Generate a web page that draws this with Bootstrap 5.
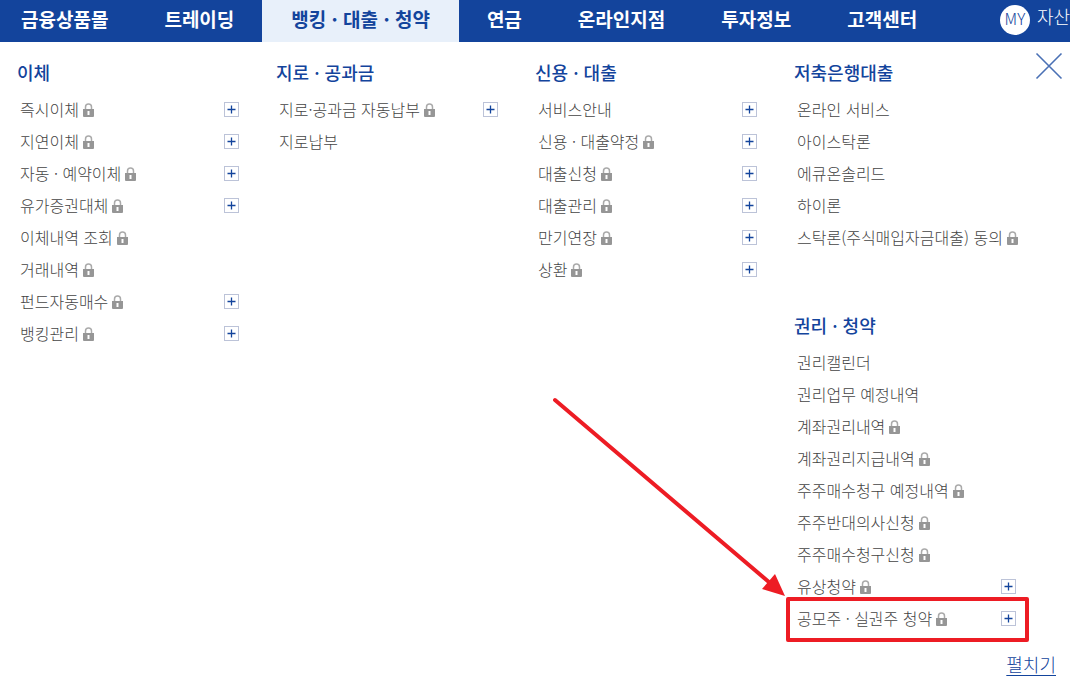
<!DOCTYPE html>
<html lang="ko">
<head>
<meta charset="utf-8">
<meta name="viewport" content="width=device-width, initial-scale=1">
<title>뱅킹 · 대출 · 청약</title>
<link href="https://cdn.jsdelivr.net/npm/bootstrap@5.3.0/dist/css/bootstrap.min.css" rel="stylesheet">
<style>
  :root { --brand: #13449c; --brand-soft: #e8f0fa; --mark: #ed1c24; }
  body { font-family: "Noto Sans CJK KR", sans-serif; font-size: 16px; color: #444; background: #fff; }
  a { text-decoration: none; }
  .gnb { background: var(--brand); height: 42px; }
  .gnb .nav-link { color: #fff; font-size: 19px; font-weight: 700; line-height: 38px; padding: 0 28px 4px; }
  .gnb .nav-item:first-child .nav-link { padding-left: 21px; }
  .gnb .nav-link.active { background: var(--brand-soft); color: var(--brand); padding: 0 29px 4px; }
  .my-link { color: #fff; font-size: 18px; font-weight: 300; line-height: 32px; margin-left: auto; gap: 7px; }
  .my-mark { width: 30px; height: 30px; margin-top: 5px; background: #fff; color: var(--brand); font-size: 16px; line-height: 26px; }
  .mega { padding: 15px 17px 0 17px; }
  .menu-title { color: var(--brand); font-size: 18px; font-weight: 500; line-height: 30px; margin: 0 0 6px; }
  .menu-list { margin: 0 0 57px; }
  .menu-list li { height: 32px; padding: 0 37px 0 3px; }
  .menu-list a { color: inherit; font-weight: 300; line-height: 32px; white-space: nowrap; }
  .lock { width: 11px; height: 14px; margin: 2px 0 0 4px; flex: none; }
  .more { width: 15px; height: 15px; padding: 0; border: 1px solid #bcc3d8; background: #fff; flex: none; }
  .more svg { display: block; width: 13px; height: 13px; }
  .menu-list:last-child { margin-bottom: 0; }
  .close-menu { position: absolute; top: 10px; right: 7px; width: 28px; height: 28px; padding: 0; border: 0; background: none; }
  .close-menu svg { display: block; }
  .mark-box { position: absolute; inset: -5px 24px -8px -8px; border: 4px solid var(--mark); border-radius: 2px; pointer-events: none; }
  .mark-arrow { position: absolute; right: calc(100% + 5px); bottom: calc(100% + 5px); pointer-events: none; }
  .unfold { padding: 14px 14px 0; font-size: 18px; line-height: 32px; }
  .unfold a { color: var(--brand); font-weight: 300; text-decoration: underline; text-underline-offset: 3px; text-decoration-thickness: 1px; }
</style>
</head>
<body>
<svg class="d-none" aria-hidden="true">
  <symbol id="lock" viewBox="0 0 11 14">
    <path d="M2.500 6V4a3 3 0 0 1 6 0v2" fill="none" stroke="#aaa" stroke-width="1.500"/>
    <path d="M0 6h11v7q0 1-1 1H1q-1 0-1-1z" fill="#969696"/>
    <path d="M4.500 8h2v4h-2z" fill="#fff"/>
  </symbol>
  <symbol id="plus" viewBox="0 0 13 13">
    <path d="M6.500 2.500v8M2.500 6.500h8" stroke="#13449c" stroke-width="1.300"/>
  </symbol>
</svg>

<header class="gnb d-flex overflow-hidden">
  <ul class="nav flex-nowrap flex-shrink-0 text-nowrap">
    <li class="nav-item"><a class="nav-link" href="#">금융상품몰</a></li>
    <li class="nav-item"><a class="nav-link" href="#">트레이딩</a></li>
    <li class="nav-item"><a class="nav-link active" aria-current="page" href="#">뱅킹 · 대출 · 청약</a></li>
    <li class="nav-item"><a class="nav-link" href="#">연금</a></li>
    <li class="nav-item"><a class="nav-link" href="#">온라인지점</a></li>
    <li class="nav-item"><a class="nav-link" href="#">투자정보</a></li>
    <li class="nav-item"><a class="nav-link" href="#">고객센터</a></li>
  </ul>
  <a class="my-link d-flex flex-shrink-0 text-nowrap" href="#"><span class="my-mark rounded-circle text-center">MY</span>자산</a>
</header>

<main class="mega position-relative">
  <div class="row g-0">
    <section class="col-3">
      <h2 class="menu-title">이체</h2>
      <ul class="menu-list list-unstyled">
        <li class="d-flex align-items-center"><a href="#">즉시이체</a><svg class="lock"><use href="#lock"/></svg><button class="more ms-auto" type="button" aria-label="즉시이체 더보기"><svg><use href="#plus"/></svg></button></li>
        <li class="d-flex align-items-center"><a href="#">지연이체</a><svg class="lock"><use href="#lock"/></svg><button class="more ms-auto" type="button" aria-label="지연이체 더보기"><svg><use href="#plus"/></svg></button></li>
        <li class="d-flex align-items-center"><a href="#">자동 · 예약이체</a><svg class="lock"><use href="#lock"/></svg><button class="more ms-auto" type="button" aria-label="자동 · 예약이체 더보기"><svg><use href="#plus"/></svg></button></li>
        <li class="d-flex align-items-center"><a href="#">유가증권대체</a><svg class="lock"><use href="#lock"/></svg><button class="more ms-auto" type="button" aria-label="유가증권대체 더보기"><svg><use href="#plus"/></svg></button></li>
        <li class="d-flex align-items-center"><a href="#">이체내역 조회</a><svg class="lock"><use href="#lock"/></svg></li>
        <li class="d-flex align-items-center"><a href="#">거래내역</a><svg class="lock"><use href="#lock"/></svg></li>
        <li class="d-flex align-items-center"><a href="#">펀드자동매수</a><svg class="lock"><use href="#lock"/></svg><button class="more ms-auto" type="button" aria-label="펀드자동매수 더보기"><svg><use href="#plus"/></svg></button></li>
        <li class="d-flex align-items-center"><a href="#">뱅킹관리</a><svg class="lock"><use href="#lock"/></svg><button class="more ms-auto" type="button" aria-label="뱅킹관리 더보기"><svg><use href="#plus"/></svg></button></li>
      </ul>
    </section>
    <section class="col-3">
      <h2 class="menu-title">지로 · 공과금</h2>
      <ul class="menu-list list-unstyled">
        <li class="d-flex align-items-center"><a href="#">지로·공과금 자동납부</a><svg class="lock"><use href="#lock"/></svg><button class="more ms-auto" type="button" aria-label="지로·공과금 자동납부 더보기"><svg><use href="#plus"/></svg></button></li>
        <li class="d-flex align-items-center"><a href="#">지로납부</a></li>
      </ul>
    </section>
    <section class="col-3">
      <h2 class="menu-title">신용 · 대출</h2>
      <ul class="menu-list list-unstyled">
        <li class="d-flex align-items-center"><a href="#">서비스안내</a><button class="more ms-auto" type="button" aria-label="서비스안내 더보기"><svg><use href="#plus"/></svg></button></li>
        <li class="d-flex align-items-center"><a href="#">신용 · 대출약정</a><svg class="lock"><use href="#lock"/></svg><button class="more ms-auto" type="button" aria-label="신용 · 대출약정 더보기"><svg><use href="#plus"/></svg></button></li>
        <li class="d-flex align-items-center"><a href="#">대출신청</a><svg class="lock"><use href="#lock"/></svg><button class="more ms-auto" type="button" aria-label="대출신청 더보기"><svg><use href="#plus"/></svg></button></li>
        <li class="d-flex align-items-center"><a href="#">대출관리</a><svg class="lock"><use href="#lock"/></svg><button class="more ms-auto" type="button" aria-label="대출관리 더보기"><svg><use href="#plus"/></svg></button></li>
        <li class="d-flex align-items-center"><a href="#">만기연장</a><svg class="lock"><use href="#lock"/></svg><button class="more ms-auto" type="button" aria-label="만기연장 더보기"><svg><use href="#plus"/></svg></button></li>
        <li class="d-flex align-items-center"><a href="#">상환</a><svg class="lock"><use href="#lock"/></svg><button class="more ms-auto" type="button" aria-label="상환 더보기"><svg><use href="#plus"/></svg></button></li>
      </ul>
    </section>
    <section class="col-3">
      <h2 class="menu-title">저축은행대출</h2>
      <ul class="menu-list list-unstyled">
        <li class="d-flex align-items-center"><a href="#">온라인 서비스</a></li>
        <li class="d-flex align-items-center"><a href="#">아이스탁론</a></li>
        <li class="d-flex align-items-center"><a href="#">에큐온솔리드</a></li>
        <li class="d-flex align-items-center"><a href="#">하이론</a></li>
        <li class="d-flex align-items-center"><a href="#">스탁론(주식매입자금대출) 동의</a><svg class="lock"><use href="#lock"/></svg></li>
      </ul>
      <h2 class="menu-title">권리 · 청약</h2>
      <ul class="menu-list list-unstyled">
        <li class="d-flex align-items-center"><a href="#">권리캘린더</a></li>
        <li class="d-flex align-items-center"><a href="#">권리업무 예정내역</a></li>
        <li class="d-flex align-items-center"><a href="#">계좌권리내역</a><svg class="lock"><use href="#lock"/></svg></li>
        <li class="d-flex align-items-center"><a href="#">계좌권리지급내역</a><svg class="lock"><use href="#lock"/></svg></li>
        <li class="d-flex align-items-center"><a href="#">주주매수청구 예정내역</a><svg class="lock"><use href="#lock"/></svg></li>
        <li class="d-flex align-items-center"><a href="#">주주반대의사신청</a><svg class="lock"><use href="#lock"/></svg></li>
        <li class="d-flex align-items-center"><a href="#">주주매수청구신청</a><svg class="lock"><use href="#lock"/></svg></li>
        <li class="d-flex align-items-center"><a href="#">유상청약</a><svg class="lock"><use href="#lock"/></svg><button class="more ms-auto" type="button" aria-label="유상청약 더보기"><svg><use href="#plus"/></svg></button></li>
        <li class="d-flex align-items-center position-relative"><a href="#">공모주 · 실권주 청약</a><svg class="lock"><use href="#lock"/></svg><button class="more ms-auto" type="button" aria-label="공모주 · 실권주 청약 더보기"><svg><use href="#plus"/></svg></button>
          <span class="mark-box">
            <svg class="mark-arrow" width="235" height="200" viewBox="0 0 235 200" aria-hidden="true">
              <path d="M5 4L220 187" stroke="#ed1c24" stroke-width="4" stroke-linecap="round"/>
              <path d="M235 200L212 193L225 178z" fill="#ed1c24"/>
            </svg>
          </span>
        </li>
      </ul>
    </section>
  </div>
  <button class="close-menu" type="button" aria-label="메뉴 닫기">
    <svg width="28" height="28" viewBox="0 0 28 28"><path d="M1.500 1.500L26.500 26.500M26.500 1.500L1.500 26.500" stroke="#4a70b5" stroke-width="1.600"/></svg>
  </button>
</main>
<div class="unfold text-end"><a href="#">펼치기</a></div>
<script src="https://cdn.jsdelivr.net/npm/bootstrap@5.3.0/dist/js/bootstrap.bundle.min.js"></script>
</body>
</html>
